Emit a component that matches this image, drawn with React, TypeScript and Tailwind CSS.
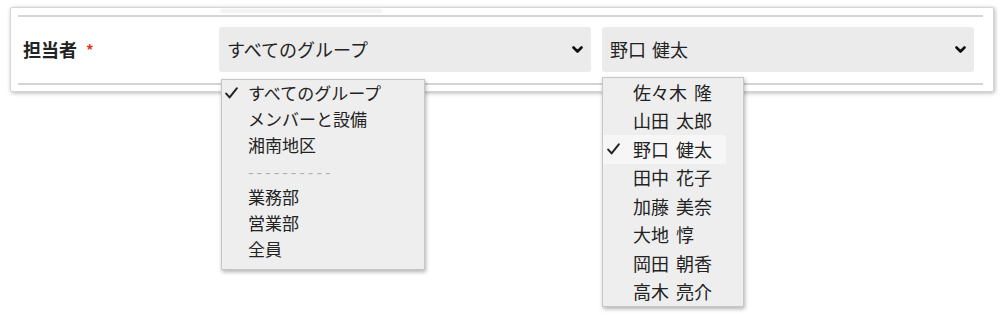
import { ReactNode } from "react"

const groups = ["すべてのグループ", "メンバーと設備", "湘南地区", "----------", "業務部", "営業部", "全員"]
const members = ["佐々木 隆", "山田 太郎", "野口 健太", "田中 花子", "加藤 美奈", "大地 惇", "岡田 朝香", "高木 亮介"]

function Chevron() {
  return (
    <svg width="11" height="8" viewBox="0 0 11 8" className="shrink-0">
      <path d="M1.5 1.5 L5.5 5.5 L9.5 1.5" fill="none" stroke="#111" strokeWidth="2.6" strokeLinecap="round" strokeLinejoin="round" />
    </svg>
  )
}

function Check() {
  return (
    <svg width="13" height="12" viewBox="0 0 13 12">
      <path d="M1.2 6.6 L4.6 10.4 L11.8 1.4" fill="none" stroke="#222" strokeWidth="2" strokeLinecap="round" strokeLinejoin="round" />
    </svg>
  )
}

function SelectBox({ value, children }: { value: string; children?: ReactNode }) {
  return (
    <div className="relative flex-1 h-[45px] rounded-[3px] bg-[#ebebeb] flex items-center justify-between pl-[8px] pr-[8px]">
      <span className="text-[18px] text-[#222] [word-spacing:2px]">{value}</span>
      <Chevron />
      {children}
    </div>
  )
}

export default function App() {
  return (
    <div className="w-[1004px] h-[321px] bg-white pt-[7px] pl-[10px] font-['Noto_Sans_CJK_JP','Noto_Sans',sans-serif]">
      <div className="w-[984px] bg-white border border-[#d6d6d6] rounded-[2px] shadow-[1px_1px_4px_rgba(0,0,0,0.3)] pl-[7px] pr-[10px] pb-[6px]">
        <div className="h-[7px] pl-[202px] pt-[1px]">
          <div className="w-[163px] h-[4px] rounded-full bg-[#f1f1f1] blur-[1px]" />
        </div>
        <div className="border-t-2 border-b-2 border-[#d4d4d4] flex items-center pt-[10px] pb-[11px] pr-[9px]">
          <div className="w-[201px] pl-[5px] flex items-center gap-[9px]">
            <span className="text-[18px] font-bold text-[#222]">担当者</span>
            <span className="text-[15px] font-bold text-[#e8341c] leading-none">*</span>
          </div>
          <div className="flex-1 flex gap-[11px]">
            <SelectBox value="すべてのグループ">
              <div className="absolute left-[2px] top-[52px] w-[204px] bg-[#eeeeee] border border-[#c6c6c6] shadow-[1px_2px_4px_rgba(0,0,0,0.3)] pb-[7px] z-10">
                {groups.map((g, i) => (
                  <div key={g} className="h-[26px] flex items-center">
                    <div className="w-[26px] flex justify-start pl-[3px]">{i === 0 && <Check />}</div>
                    <span className={g.startsWith("-") ? "text-[16px] text-[#b0b0b0] tracking-[3px]" : "text-[17px] text-[#222]"}>{g}</span>
                  </div>
                ))}
              </div>
            </SelectBox>
            <SelectBox value="野口 健太">
              <div className="absolute left-0 top-[50px] w-[142px] bg-[#eeeeee] border border-[#c6c6c6] shadow-[1px_2px_4px_rgba(0,0,0,0.3)] z-10">
                {members.map((m, i) => (
                  <div key={m} className={`h-[28.5px] flex items-center w-[123px] ${i === 2 ? "bg-[#f6f6f6]" : ""}`}>
                    <div className="w-[30px] flex justify-start pl-[4px]">{i === 2 && <Check />}</div>
                    <span className="text-[18px] text-[#222] [word-spacing:3px]">{m}</span>
                  </div>
                ))}
              </div>
            </SelectBox>
          </div>
        </div>
      </div>
    </div>
  )
}
